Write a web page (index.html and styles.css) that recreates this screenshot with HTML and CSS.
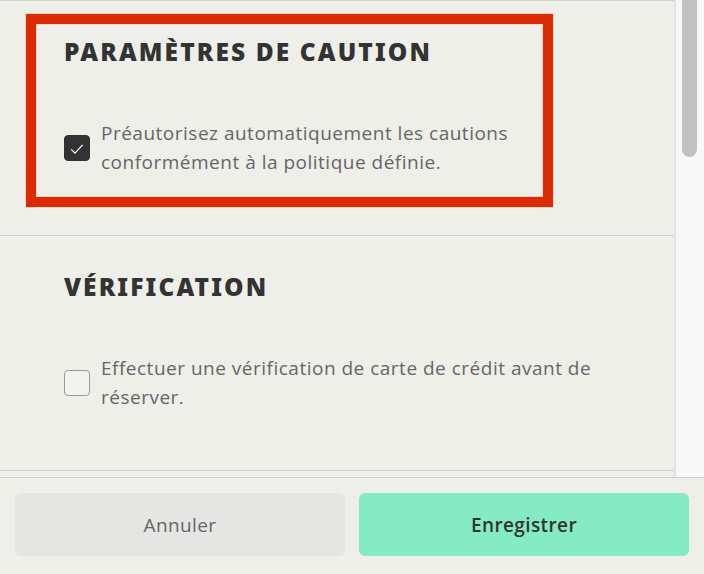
FILE: index.html
```html
<!DOCTYPE html>
<html lang="fr">
<head>
  <meta charset="UTF-8">
  <meta name="viewport" content="width=device-width, initial-scale=1.0">
  <title>Paramètres</title>
  <link rel="stylesheet" href="styles.css">
</head>
<body>
  <div class="panel">
    <div class="scroll">
      <div class="settings">

        <!-- Caution -->
        <section class="section">
          <div class="highlight"></div>
          <h2>Paramètres de caution</h2>
          <label class="option">
            <span class="box checked">
              <svg viewBox="0 0 26 26" width="26" height="26"><path d="M7.2 14.4 L11 18.2 L18.6 9.8" /></svg>
            </span>
            <span class="option-text">Préautorisez automatiquement les cautions conformément à la politique définie.</span>
          </label>
        </section>

        <!-- Vérification -->
        <section class="section">
          <h2>Vérification</h2>
          <label class="option">
            <span class="box"></span>
            <span class="option-text">Effectuer une vérification de carte de crédit avant de réserver.</span>
          </label>
        </section>

        <section class="section"></section>
      </div>

      <div class="scrollbar">
        <div class="thumb"></div>
      </div>
    </div>

    <div class="footer">
      <button class="btn btn-cancel">Annuler</button>
      <button class="btn btn-save">Enregistrer</button>
    </div>
  </div>
</body>
</html>
```
FILE: styles.css
```css
* {
  margin: 0;
  padding: 0;
  box-sizing: border-box;
}
body {
  font-family: 'Open Sans', sans-serif;
  background: #efefea;
  color: #666;
}
.panel {
  display: flex;
  flex-direction: column;
  height: 574px;
}
.scroll {
  display: flex;
  height: 477px;
  overflow: hidden;
}
.settings {
  flex: 1;
  min-width: 0;
}
.scrollbar {
  flex: none;
  width: 30px;
  background: #f8f8f8;
  border-left: 2px solid #e4e4e2;
  padding-left: 6px;
}
.thumb {
  width: 15px;
  height: 157px;
  background: #c1c1c1;
  border-radius: 0 0 8px 8px;
}
.section {
  position: relative;
  border-top: 1px solid #d0d0cc;
  padding: 35px 64px 58px;
}
.highlight {
  position: absolute;
  left: 26px;
  top: 13px;
  width: 527px;
  height: 193px;
  border: 10px solid #dc2a02;
  box-shadow: 0 0 0 1px #f2d6cd, inset 0 0 0 1px #f2d6cd;
}
h2 {
  font-family: 'Noto Sans', sans-serif;
  font-weight: 900;
  font-size: 24.5px;
  line-height: 32px;
  letter-spacing: 2.1px;
  text-transform: uppercase;
  color: #333;
}
.option {
  display: flex;
  align-items: center;
  gap: 11px;
  margin-top: 51px;
}
.box {
  flex: none;
  width: 26px;
  height: 26px;
  border: 1px solid #9a9a98;
  border-radius: 4px;
  background: #f2f2ee;
}
.box.checked {
  background: #333;
  border-color: #333;
}
.box svg {
  display: block;
  margin: -1px;
}
.box path {
  fill: none;
  stroke: #fff;
  stroke-width: 1.2;
}
.option-text {
  font-size: 19px;
  line-height: 29px;
  letter-spacing: 0.5px;
  color: #666;
}
.footer {
  flex: none;
  display: flex;
  gap: 14px;
  padding: 15px 15px 18px;
  border-top: 1px solid #d0d0cc;
}
.btn {
  flex: 1;
  height: 63px;
  border: none;
  border-radius: 6px;
  font-family: 'Open Sans', sans-serif;
  font-size: 19px;
  letter-spacing: 0.4px;
  cursor: pointer;
}
.btn-cancel {
  background: #e5e5e3;
  color: #666;
}
.btn-save {
  background: #84ebc5;
  color: #333;
  font-weight: 600;
}
```
